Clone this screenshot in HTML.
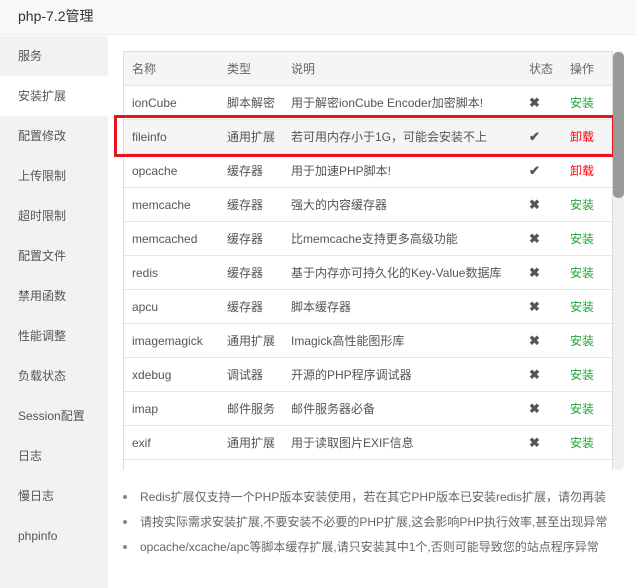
<!DOCTYPE html>
<html><head><meta charset="utf-8"><style>
*{margin:0;padding:0;box-sizing:border-box}
body{width:636px;height:588px;overflow:hidden;background:#fff;font-family:"Liberation Sans","Noto Sans CJK SC",sans-serif;font-size:12px;color:#555;position:relative}
.title{position:absolute;left:0;top:0;width:636px;height:35px;background:#f8f8f8;border-bottom:1px solid #eee;font-size:14px;color:#333;line-height:33px;padding-left:18px}
.side{position:absolute;left:0;top:36px;width:108px;height:552px;background:#f2f2f2}
.side div{height:40px;line-height:40px;padding-left:18px;color:#555;font-size:12px}
.side .on{background:#fff}
.tw{position:absolute;left:123px;top:51px;width:490px;height:419px;overflow:hidden;border:1px solid #ddd;border-bottom:none}
.r{position:absolute;left:0;width:490px;height:34px;border-bottom:1px solid #e6e6e6;line-height:34px}
.r span{position:absolute;white-space:nowrap}
.c1{left:8px}.c2{left:103px}.c3{left:167px}.c4{left:405px;color:#555;font-size:13px;font-weight:bold}.c5{left:446px}
.h{background:#f5f5f5;color:#666}
.g{color:#20a53a}.red{color:#f00}
.box{position:absolute;left:114px;top:115px;width:501px;height:42px;border:3px solid #e8141c}
.sb{position:absolute;left:613px;top:51px;width:11px;height:419px;background:#f0f0f0;border-radius:5px}
.th{position:absolute;left:613px;top:52px;width:11px;height:146px;background:#999;border-radius:5px}
ul{position:absolute;left:123px;top:487px;list-style:none;color:#666;font-size:12px}
li{height:25px;line-height:20px;padding-left:17px;position:relative;white-space:nowrap}
li:before{content:"";position:absolute;left:0;top:8px;width:4px;height:4px;border-radius:2px;background:#888}
</style></head><body>
<div class="title">php-7.2管理</div>
<div class="side">
<div>服务</div><div class="on">安装扩展</div><div>配置修改</div><div>上传限制</div><div>超时限制</div><div>配置文件</div><div>禁用函数</div><div>性能调整</div><div>负载状态</div><div>Session配置</div><div>日志</div><div>慢日志</div><div>phpinfo</div>
</div>
<div class="tw">
<div class="r h" style="top:0"><span class="c1">名称</span><span class="c2">类型</span><span class="c3">说明</span><span class="c4" style="font-weight:normal;font-size:12px;color:#666">状态</span><span class="c5">操作</span></div>
<div class="r" style="top:34px"><span class="c1">ionCube</span><span class="c2">脚本解密</span><span class="c3">用于解密ionCube Encoder加密脚本!</span><span class="c4">✖</span><span class="c5 g">安装</span></div>
<div class="r" style="top:68px;background:#f5f5f5"><span class="c1">fileinfo</span><span class="c2">通用扩展</span><span class="c3">若可用内存小于1G，可能会安装不上</span><span class="c4">✔</span><span class="c5 red">卸载</span></div>
<div class="r" style="top:102px"><span class="c1">opcache</span><span class="c2">缓存器</span><span class="c3">用于加速PHP脚本!</span><span class="c4">✔</span><span class="c5 red">卸载</span></div>
<div class="r" style="top:136px"><span class="c1">memcache</span><span class="c2">缓存器</span><span class="c3">强大的内容缓存器</span><span class="c4">✖</span><span class="c5 g">安装</span></div>
<div class="r" style="top:170px"><span class="c1">memcached</span><span class="c2">缓存器</span><span class="c3">比memcache支持更多高级功能</span><span class="c4">✖</span><span class="c5 g">安装</span></div>
<div class="r" style="top:204px"><span class="c1">redis</span><span class="c2">缓存器</span><span class="c3">基于内存亦可持久化的Key-Value数据库</span><span class="c4">✖</span><span class="c5 g">安装</span></div>
<div class="r" style="top:238px"><span class="c1">apcu</span><span class="c2">缓存器</span><span class="c3">脚本缓存器</span><span class="c4">✖</span><span class="c5 g">安装</span></div>
<div class="r" style="top:272px"><span class="c1">imagemagick</span><span class="c2">通用扩展</span><span class="c3">Imagick高性能图形库</span><span class="c4">✖</span><span class="c5 g">安装</span></div>
<div class="r" style="top:306px"><span class="c1">xdebug</span><span class="c2">调试器</span><span class="c3">开源的PHP程序调试器</span><span class="c4">✖</span><span class="c5 g">安装</span></div>
<div class="r" style="top:340px"><span class="c1">imap</span><span class="c2">邮件服务</span><span class="c3">邮件服务器必备</span><span class="c4">✖</span><span class="c5 g">安装</span></div>
<div class="r" style="top:374px"><span class="c1">exif</span><span class="c2">通用扩展</span><span class="c3">用于读取图片EXIF信息</span><span class="c4">✖</span><span class="c5 g">安装</span></div>
<div class="r" style="top:408px"></div>
</div>
<div class="box"></div>
<div class="sb"></div><div class="th"></div>
<ul>
<li>Redis扩展仅支持一个PHP版本安装使用，若在其它PHP版本已安装redis扩展，请勿再装</li>
<li>请按实际需求安装扩展,不要安装不必要的PHP扩展,这会影响PHP执行效率,甚至出现异常</li>
<li>opcache/xcache/apc等脚本缓存扩展,请只安装其中1个,否则可能导致您的站点程序异常</li>
</ul>
</body></html>
